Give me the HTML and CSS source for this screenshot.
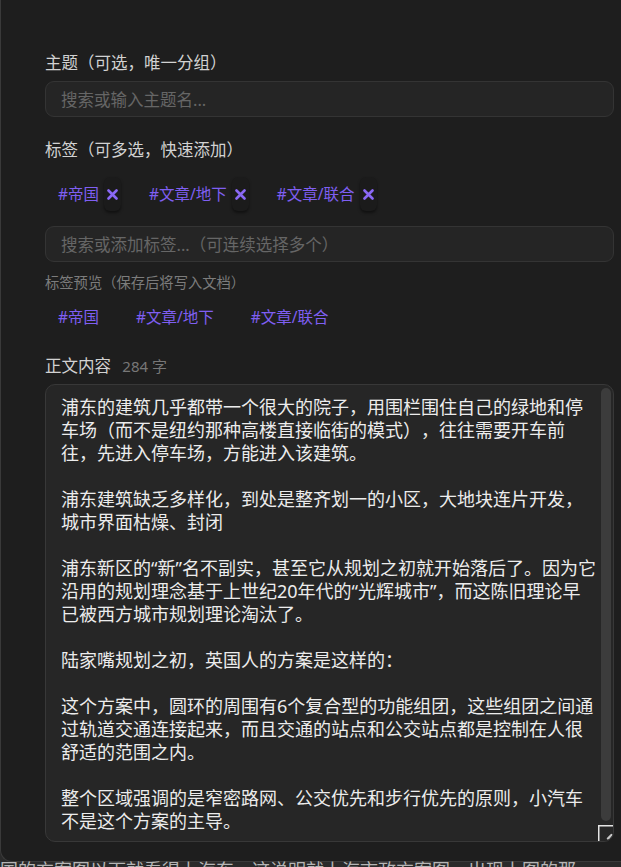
FILE: index.html
```html
<!DOCTYPE html>
<html lang="zh-CN">
<head>
<meta charset="utf-8">
<title>编辑文档</title>
<link rel="stylesheet" href="styles.css">
</head>
<body>
<div class="modal">
  <div class="field">
    <div class="label">主题（可选，唯一分组）</div>
    <div class="input"><span class="placeholder">搜索或输入主题名...</span></div>
  </div>

  <div class="field field-tags">
    <div class="label">标签（可多选，快速添加）</div>
    <div class="chips">
      <span class="chip"><span class="chip-text">#帝国</span><span class="chip-x"><svg width="11" height="11" viewBox="0 0 11 11"><path d="M1.5 1.5L9.5 9.5M9.5 1.5L1.5 9.5"/></svg></span></span>
      <span class="chip"><span class="chip-text">#文章/地下</span><span class="chip-x"><svg width="11" height="11" viewBox="0 0 11 11"><path d="M1.5 1.5L9.5 9.5M9.5 1.5L1.5 9.5"/></svg></span></span>
      <span class="chip"><span class="chip-text">#文章/联合</span><span class="chip-x"><svg width="11" height="11" viewBox="0 0 11 11"><path d="M1.5 1.5L9.5 9.5M9.5 1.5L1.5 9.5"/></svg></span></span>
    </div>
    <div class="input input-tags"><span class="placeholder">搜索或添加标签...（可连续选择多个）</span></div>
    <div class="hint">标签预览（保存后将写入文档）</div>
    <div class="preview">
      <span class="ptag">#帝国</span>
      <span class="ptag">#文章/地下</span>
      <span class="ptag">#文章/联合</span>
    </div>
  </div>

  <div class="field field-body">
    <div class="label">正文内容 <span class="count">284 字</span></div>
    <div class="editor">
      <div class="editor-text">浦东的建筑几乎都带一个很大的院子，用围栏围住自己的绿地和停
车场（而不是纽约那种高楼直接临街的模式），往往需要开车前
往，先进入停车场，方能进入该建筑。

浦东建筑缺乏多样化，到处是整齐划一的小区，大地块连片开发，
城市界面枯燥、封闭

浦东新区的“新”名不副实，甚至它从规划之初就开始落后了。因为它
沿用的规划理念基于上世纪20年代的“光辉城市”，而这陈旧理论早
已被西方城市规划理论淘汰了。

陆家嘴规划之初，英国人的方案是这样的：

这个方案中，圆环的周围有6个复合型的功能组团，这些组团之间通
过轨道交通连接起来，而且交通的站点和公交站点都是控制在人很
舒适的范围之内。

整个区域强调的是窄密路网、公交优先和步行优先的原则，小汽车
不是这个方案的主导。</div>
      <div class="scroll-thumb"></div>
      <div class="resizer"><svg width="15" height="16" viewBox="0 0 15 16"><path class="resizer-edge" d="M0.75 16V0.75H15"/><path class="resizer-grip" d="M10 13.5L13.5 10"/></svg></div>
    </div>
  </div>
</div>
<p class="below">国的方案图以下就看得上海东，这说明就上海市政方案图，出现上图的那</p>
</body>
</html>
```

FILE: styles.css
```css
html, body {
  margin: 0;
  height: 867px;
  overflow: hidden;
}

body {
  background: #2a2a2a;
  font-family: "Noto Sans", "Noto Sans CJK SC", sans-serif;
  text-spacing-trim: space-all;
}

.modal {
  width: calc(100% + 20px);
  box-sizing: border-box;
  background: #1e1e1e;
  border-left: 1px solid #3a3a3a;
  border-bottom: 1px solid #3a3a3a;
  border-bottom-left-radius: 12px;
  padding: 52px 27px 19px 44px;
}

.label {
  font-size: 16.5px;
  line-height: 22px;
  color: #d2d2d2;
  white-space: nowrap;
}

.input {
  margin-top: 7px;
  height: 36px;
  box-sizing: border-box;
  border: 1px solid #343434;
  border-radius: 9px;
  background: #252525;
  padding: 0 15px;
  display: flex;
  align-items: center;
}

.placeholder {
  font-size: 16.5px;
  color: #666666;
  white-space: nowrap;
}

.field-tags {
  margin-top: 22px;
}

.chips {
  margin-top: 16px;
  height: 34px;
  display: flex;
  align-items: center;
}

.chip {
  display: flex;
  align-items: center;
  gap: 5px;
  padding: 0 3px 0 13px;
  margin-right: 12px;
}

.chip-text {
  font-size: 15.5px;
  line-height: 22px;
  color: #7f5ff2;
}

.chip-x {
  width: 17px;
  height: 34px;
  border-radius: 6px;
  background: #1b1b1b;
  box-shadow: 0 2px 3px rgba(0, 0, 0, 0.45);
  display: flex;
  align-items: center;
  justify-content: center;
}

.chip-x svg path {
  fill: none;
  stroke: #8a68f5;
  stroke-width: 2.6;
  stroke-linecap: round;
}

.input-tags {
  margin-top: 15px;
}

.hint {
  margin-top: 11px;
  font-size: 14.3px;
  line-height: 20px;
  color: #7c7c7c;
  white-space: nowrap;
}

.preview {
  margin-top: 12px;
  display: flex;
  gap: 12px;
}

.ptag {
  padding: 0 12px 0 13px;
  font-size: 15.5px;
  line-height: 24px;
  color: #7f5ff2;
}

.field-body {
  margin-top: 26px;
}

.count {
  font-size: 15px;
  color: #777777;
  margin-left: 7px;
}

.editor {
  position: relative;
  margin-top: 7px;
  height: 458px;
  box-sizing: border-box;
  border: 1px solid #383838;
  border-radius: 10px;
  background: #262626;
  overflow: hidden;
  padding: 11px 15px 0;
}

.editor-text {
  font-size: 18px;
  line-height: 23px;
  color: #ececec;
  white-space: pre;
}

.scroll-thumb {
  position: absolute;
  top: 3px;
  right: 2px;
  width: 10px;
  height: 433px;
  border-radius: 5px;
  background: #3c3c3c;
}

.resizer {
  position: absolute;
  right: 0;
  bottom: 0;
  width: 15px;
  height: 16px;
  background: #262626;
}

.resizer svg {
  display: block;
}

.resizer-edge {
  fill: none;
  stroke: #e4e4e4;
  stroke-width: 1.5;
}

.resizer-grip {
  fill: none;
  stroke: #c8c8c8;
  stroke-width: 2.4;
  stroke-linecap: round;
}

.below {
  margin: -3px 0 0;
  font-size: 18px;
  line-height: 23px;
  color: #b5b5b5;
  white-space: nowrap;
}
```
